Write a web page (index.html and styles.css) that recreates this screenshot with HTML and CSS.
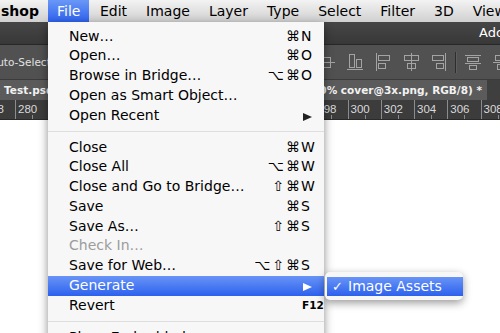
FILE: index.html
```html
<!DOCTYPE html>
<html lang="en">
<head>
    <meta charset="UTF-8">
    <meta name="viewport" content="width=device-width, initial-scale=1.0">
    <title>Photoshop - File Menu</title>
    <link rel="stylesheet" href="styles.css">
</head>
<body>
    <div class="screen">
        <div class="menubar">
            <span class="app-name">shop</span>
            <span class="menubar-item active">File</span>
            <span class="menubar-item">Edit</span>
            <span class="menubar-item">Image</span>
            <span class="menubar-item">Layer</span>
            <span class="menubar-item">Type</span>
            <span class="menubar-item">Select</span>
            <span class="menubar-item">Filter</span>
            <span class="menubar-item">3D</span>
            <span class="menubar-item">View</span>
        </div>

        <div class="titlebar">Adobe Photoshop CC</div>

        <div class="options-bar">
            <span class="auto-select">Auto-Select</span>
            <div class="align-icons">
                <svg class="icon" width="16" height="18" viewBox="0 0 16 18"><path d="M0 9.5h16"/><rect x="4.5" y="4.5" width="7" height="10"/></svg>
                <svg class="icon" width="16" height="18" viewBox="0 0 16 18"><path d="M0 16.5h16"/><rect x="2.5" y="1.5" width="5" height="13"/><rect x="9.5" y="6.5" width="5" height="8"/></svg>
                <svg class="icon" width="16" height="18" viewBox="0 0 16 18"><path d="M1.5 0v18"/><rect x="3.5" y="2.5" width="11" height="5"/><rect x="3.5" y="10.5" width="7" height="5"/></svg>
                <svg class="icon" width="16" height="18" viewBox="0 0 16 18"><path d="M8.5 0v18"/><rect x="1.5" y="2.5" width="14" height="5"/><rect x="4.5" y="10.5" width="8" height="5"/></svg>
                <svg class="icon" width="16" height="18" viewBox="0 0 16 18"><path d="M14.5 0v18"/><rect x="1.5" y="2.5" width="11" height="5"/><rect x="5.5" y="10.5" width="7" height="5"/></svg>
                <span class="icon-divider"></span>
                <svg class="icon" width="16" height="18" viewBox="0 0 16 18"><path d="M0 2.5h16M0 10.5h16"/><rect x="2.5" y="4.5" width="11" height="4"/><rect x="4.5" y="12.5" width="7" height="4"/></svg>
                <svg class="icon" width="16" height="18" viewBox="0 0 16 18"><path d="M0 9.5h16"/><rect x="2.5" y="2.5" width="11" height="5"/><rect x="4.5" y="11.5" width="7" height="5"/></svg>
            </div>
        </div>

        <div class="tab-row">
            <div class="doc-tab">Test.psd @ 100% (cover.png, 200% cover@2x.png, 300% cover@3x.png, RGB/8) *</div>
        </div>

        <div class="ruler">
            <span class="ruler-mark">278</span>
            <span class="ruler-mark">280</span>
            <span class="ruler-mark">282</span>
            <span class="ruler-mark">284</span>
            <span class="ruler-mark">286</span>
            <span class="ruler-mark">288</span>
            <span class="ruler-mark">290</span>
            <span class="ruler-mark">292</span>
            <span class="ruler-mark">294</span>
            <span class="ruler-mark">296</span>
            <span class="ruler-mark">298</span>
            <span class="ruler-mark">300</span>
            <span class="ruler-mark">302</span>
            <span class="ruler-mark">304</span>
            <span class="ruler-mark">306</span>
            <span class="ruler-mark">308</span>
            <span class="ruler-mark">310</span>
        </div>

        <div class="canvas"></div>

        <div class="file-menu">
            <div class="menu-item"><span>New…</span><span class="mods">⌘</span><span class="key">N</span></div>
            <div class="menu-item"><span>Open…</span><span class="mods">⌘</span><span class="key">O</span></div>
            <div class="menu-item"><span>Browse in Bridge…</span><span class="mods">⌥⌘</span><span class="key">O</span></div>
            <div class="menu-item"><span>Open as Smart Object…</span><span class="mods"></span><span class="key"></span></div>
            <div class="menu-item"><span>Open Recent</span><span class="mods"></span><span class="key"><i class="arrow"></i></span></div>
            <div class="menu-separator"></div>
            <div class="menu-item"><span>Close</span><span class="mods">⌘</span><span class="key">W</span></div>
            <div class="menu-item"><span>Close All</span><span class="mods">⌥⌘</span><span class="key">W</span></div>
            <div class="menu-item"><span>Close and Go to Bridge…</span><span class="mods">⇧⌘</span><span class="key">W</span></div>
            <div class="menu-item"><span>Save</span><span class="mods">⌘</span><span class="key">S</span></div>
            <div class="menu-item"><span>Save As…</span><span class="mods">⇧⌘</span><span class="key">S</span></div>
            <div class="menu-item disabled"><span>Check In…</span><span class="mods"></span><span class="key"></span></div>
            <div class="menu-item"><span>Save for Web…</span><span class="mods">⌥⇧⌘</span><span class="key">S</span></div>
            <div class="menu-item selected">
                <span>Generate</span><span class="mods"></span><span class="key"><i class="arrow"></i></span>
                <div class="submenu">
                    <div class="submenu-item"><span class="check">✓</span>Image Assets</div>
                </div>
            </div>
            <div class="menu-item"><span>Revert</span><span class="mods"></span><span class="key fn">F12</span></div>
            <div class="menu-separator"></div>
            <div class="menu-item"><span>Place Embedded…</span><span class="mods"></span><span class="key"></span></div>
        </div>
    </div>
</body>
</html>
```

FILE: styles.css
```css
* {
    box-sizing: border-box;
}

body {
    margin: 0;
    font-family: "DejaVu Sans", sans-serif;
    background-color: #fff;
}

.screen {
    position: relative;
    width: 500px;
    height: 333px;
    overflow: hidden;
    display: flex;
    flex-direction: column;
    background-color: #fff;
}

/* mac menu bar */
.menubar {
    display: flex;
    flex: none;
    height: 22px;
    background: linear-gradient(#f3f3f3, #d0d0d0);
    font-size: 14px;
    color: #000;
    white-space: nowrap;
}

.app-name {
    flex: none;
    width: 48px;
    height: 22px;
    padding: 1px 0 0 1px;
    line-height: 21px;
    font-weight: bold;
}

.menubar-item {
    flex: none;
    height: 22px;
    padding: 1px 9.5px 0;
    line-height: 21px;
}

.menubar-item.active {
    padding: 1px 9px 0;
    margin-right: 1px;
    background: linear-gradient(#6a97f7, #2e62ee);
    color: #fff;
}

/* photoshop chrome */
.titlebar {
    flex: none;
    height: 23px;
    padding-left: 479px;
    background: linear-gradient(#464646, #383838);
    border-bottom: 1px solid #272727;
    color: #fff;
    font-size: 13px;
    line-height: 22px;
    white-space: nowrap;
}

.options-bar {
    display: flex;
    align-items: center;
    flex: none;
    height: 35px;
    background-color: #515151;
    border-bottom: 1px solid #3b3b3b;
    white-space: nowrap;
}

.auto-select {
    flex: none;
    margin-left: -10px;
    font-size: 10.5px;
    color: #e2e2e2;
}

.align-icons {
    display: flex;
    align-items: center;
    gap: 12px;
    margin-left: 268px;
}

.icon {
    flex: none;
    fill: none;
    stroke: #a4a4a4;
    stroke-width: 1;
}

.icon-divider {
    flex: none;
    width: 2px;
    height: 21px;
    margin: 0 -4px;
    background-color: #2e2e2e;
    border-right: 1px solid #5e5e5e;
}

.tab-row {
    flex: none;
    height: 20px;
    background-color: #3f3f3f;
}

.doc-tab {
    width: 487px;
    height: 20px;
    padding-left: 4px;
    background-color: #5b5b5b;
    color: #f2f2f2;
    font-size: 10.5px;
    font-weight: bold;
    line-height: 20px;
    white-space: nowrap;
    overflow: hidden;
}

.ruler {
    display: flex;
    flex: none;
    height: 20px;
    background-color: #3c3c3c;
    border-bottom: 1px solid #2a2a2a;
    overflow: hidden;
}

.ruler-mark {
    position: relative;
    flex: none;
    width: 33.25px;
    padding-left: 2px;
    border-left: 1px solid #8c8c8c;
    font-family: "Liberation Sans", sans-serif;
    font-size: 11.5px;
    line-height: 19px;
    color: #dadada;
}

.ruler-mark:first-child {
    margin-left: -18.2px;
}

.ruler-mark::after {
    content: "";
    position: absolute;
    left: 50%;
    bottom: 0;
    width: 1px;
    height: 4px;
    background-color: #8c8c8c;
}

.canvas {
    flex: 1;
    background-color: #fff;
}

/* file menu */
.file-menu {
    position: absolute;
    top: 22px;
    left: 48px;
    width: 276px;
    height: 340px;
    padding-top: 4.5px;
    background-color: #f7f7f7;
    box-shadow: 0 3px 9px rgba(0, 0, 0, 0.45);
    font-size: 14px;
    color: #000;
}

.menu-item {
    position: relative;
    display: grid;
    grid-template-columns: 1fr auto 23px;
    height: 19.75px;
    padding-left: 21px;
    line-height: 19.75px;
    white-space: nowrap;
}

.mods {
    text-align: right;
    letter-spacing: 2px;
    margin-right: -1px;
}

.key.fn {
    padding-left: 1px;
    font-size: 10.5px;
    font-weight: bold;
}

.arrow {
    display: inline-block;
    width: 0;
    height: 0;
    margin-left: 2px;
    border-left: 9px solid #222;
    border-top: 4.5px solid transparent;
    border-bottom: 4.5px solid transparent;
    vertical-align: -1px;
}

.menu-item.disabled {
    color: #9c9c9c;
}

.menu-item.selected {
    background: linear-gradient(#6894f6, #2d61ee);
    color: #fff;
}

.menu-item.selected .arrow {
    border-left-color: #fff;
}

.menu-separator {
    height: 1px;
    margin: 5.5px 0 5.75px;
    background-color: #dedede;
}

.submenu {
    position: absolute;
    top: -4px;
    left: calc(100% + 1px);
    width: 138px;
    height: 28px;
    padding: 5px 0 4px 2px;
    background-color: #f7f7f7;
    border-radius: 5px;
    box-shadow: 0 3px 9px rgba(0, 0, 0, 0.4);
}

.submenu-item {
    display: flex;
    height: 19px;
    padding-left: 5px;
    background: linear-gradient(#6894f6, #2d61ee);
    color: #fff;
    line-height: 19px;
}

.check {
    width: 16px;
    font-size: 13px;
}
```
